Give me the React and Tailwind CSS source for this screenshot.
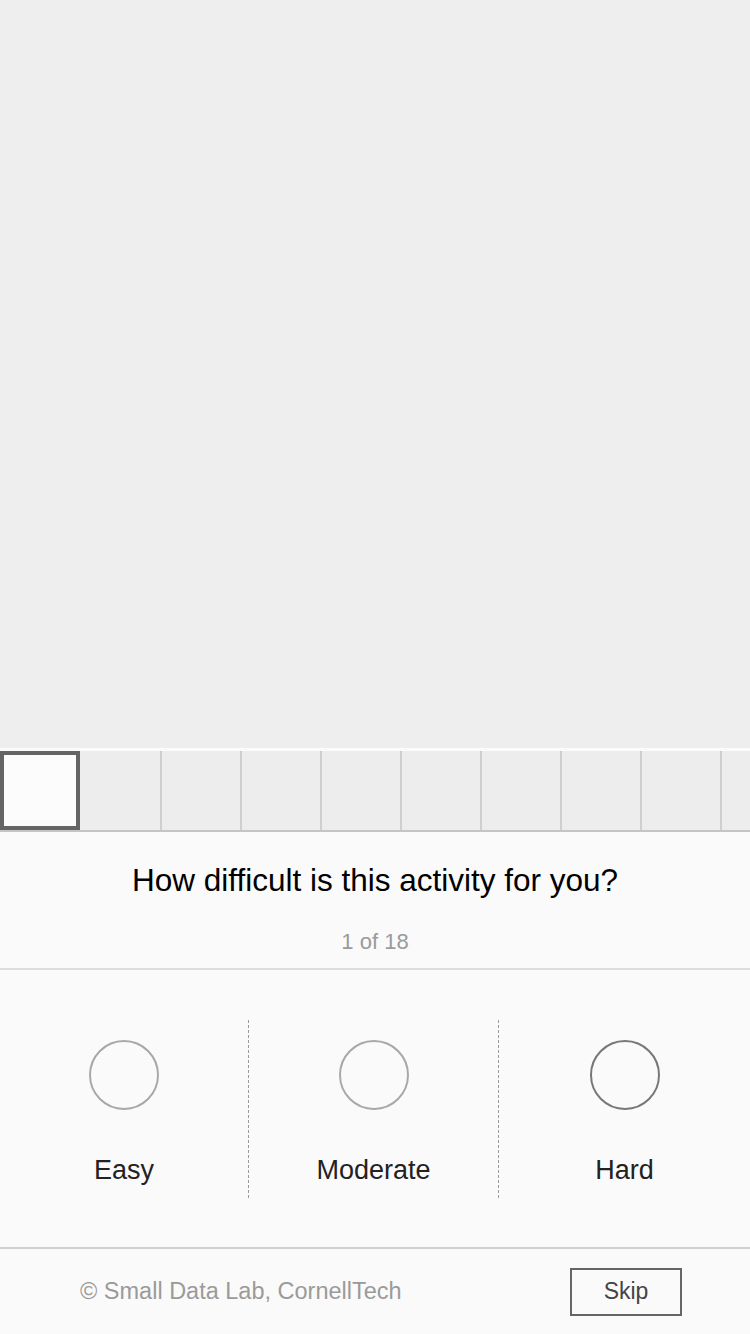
import React from 'react'

const options = [
  { label: 'Easy', ring: 'border-[#a8a8a8]', width: 'w-[249px] border-r' },
  { label: 'Moderate', ring: 'border-[#a8a8a8]', width: 'w-[250px] border-r' },
  { label: 'Hard', ring: 'border-[#777777]', width: 'flex-1' },
]

export default function App() {
  const cells = Array.from({ length: 10 }, (_, i) => i)

  return (
    <div className="flex h-[1334px] w-[750px] flex-col bg-[#eeeeee] font-['Liberation_Sans',sans-serif]">
      {/* photo area */}
      <div className="h-[748px] bg-[#eeeeee]" />
      <div className="h-[3px] bg-[#fbfbfb]" />

      {/* thumbnail strip */}
      <div className="flex h-[81px] overflow-hidden border-b-2 border-[#c4c4c4]">
        {cells.map((i) =>
          i === 0 ? (
            <div key={i} className="h-full w-[80px] shrink-0 border-[4px] border-[#656565] bg-[#fcfcfc]" />
          ) : (
            <div
              key={i}
              className={`h-full w-[80px] shrink-0 bg-[#ededed] ${i > 1 ? 'border-l-2 border-[#cfcfcf]' : ''}`}
            />
          )
        )}
      </div>

      {/* question */}
      <div className="flex h-[138px] flex-col items-center border-b-2 border-[#dcdcdc] bg-[#fafafa]">
        <p className="mt-[29px] text-[31.5px] leading-[38px] text-black">How difficult is this activity for you?</p>
        <p className="mt-[30px] text-[22px] leading-[26px] text-[#9a9a9a]">1 of 18</p>
      </div>

      {/* options */}
      <div className="flex h-[279px] items-center border-b-2 border-[#cfcfcf] bg-[#fafafa]">
        {options.map((o) => (
          <div
            key={o.label}
            className={`flex h-[178px] flex-col items-center border-dashed border-[#9a9a9a] ${o.width}`}
          >
            <div className={`mt-[20px] h-[70px] w-[70px] rounded-full border-2 ${o.ring}`} />
            <span className="mt-[44px] text-[27px] leading-[32px] text-[#222222]">{o.label}</span>
          </div>
        ))}
      </div>

      {/* footer */}
      <div className="flex flex-1 items-center justify-between bg-[#fafafa] pl-[80px] pr-[68px]">
        <span className="text-[23.5px] text-[#9a9a9a]">© Small Data Lab, CornellTech</span>
        <button
          type="button"
          className="flex h-[48px] w-[112px] items-center justify-center border-2 border-[#666666] text-[23px] text-[#444444]"
        >
          Skip
        </button>
      </div>
    </div>
  )
}
